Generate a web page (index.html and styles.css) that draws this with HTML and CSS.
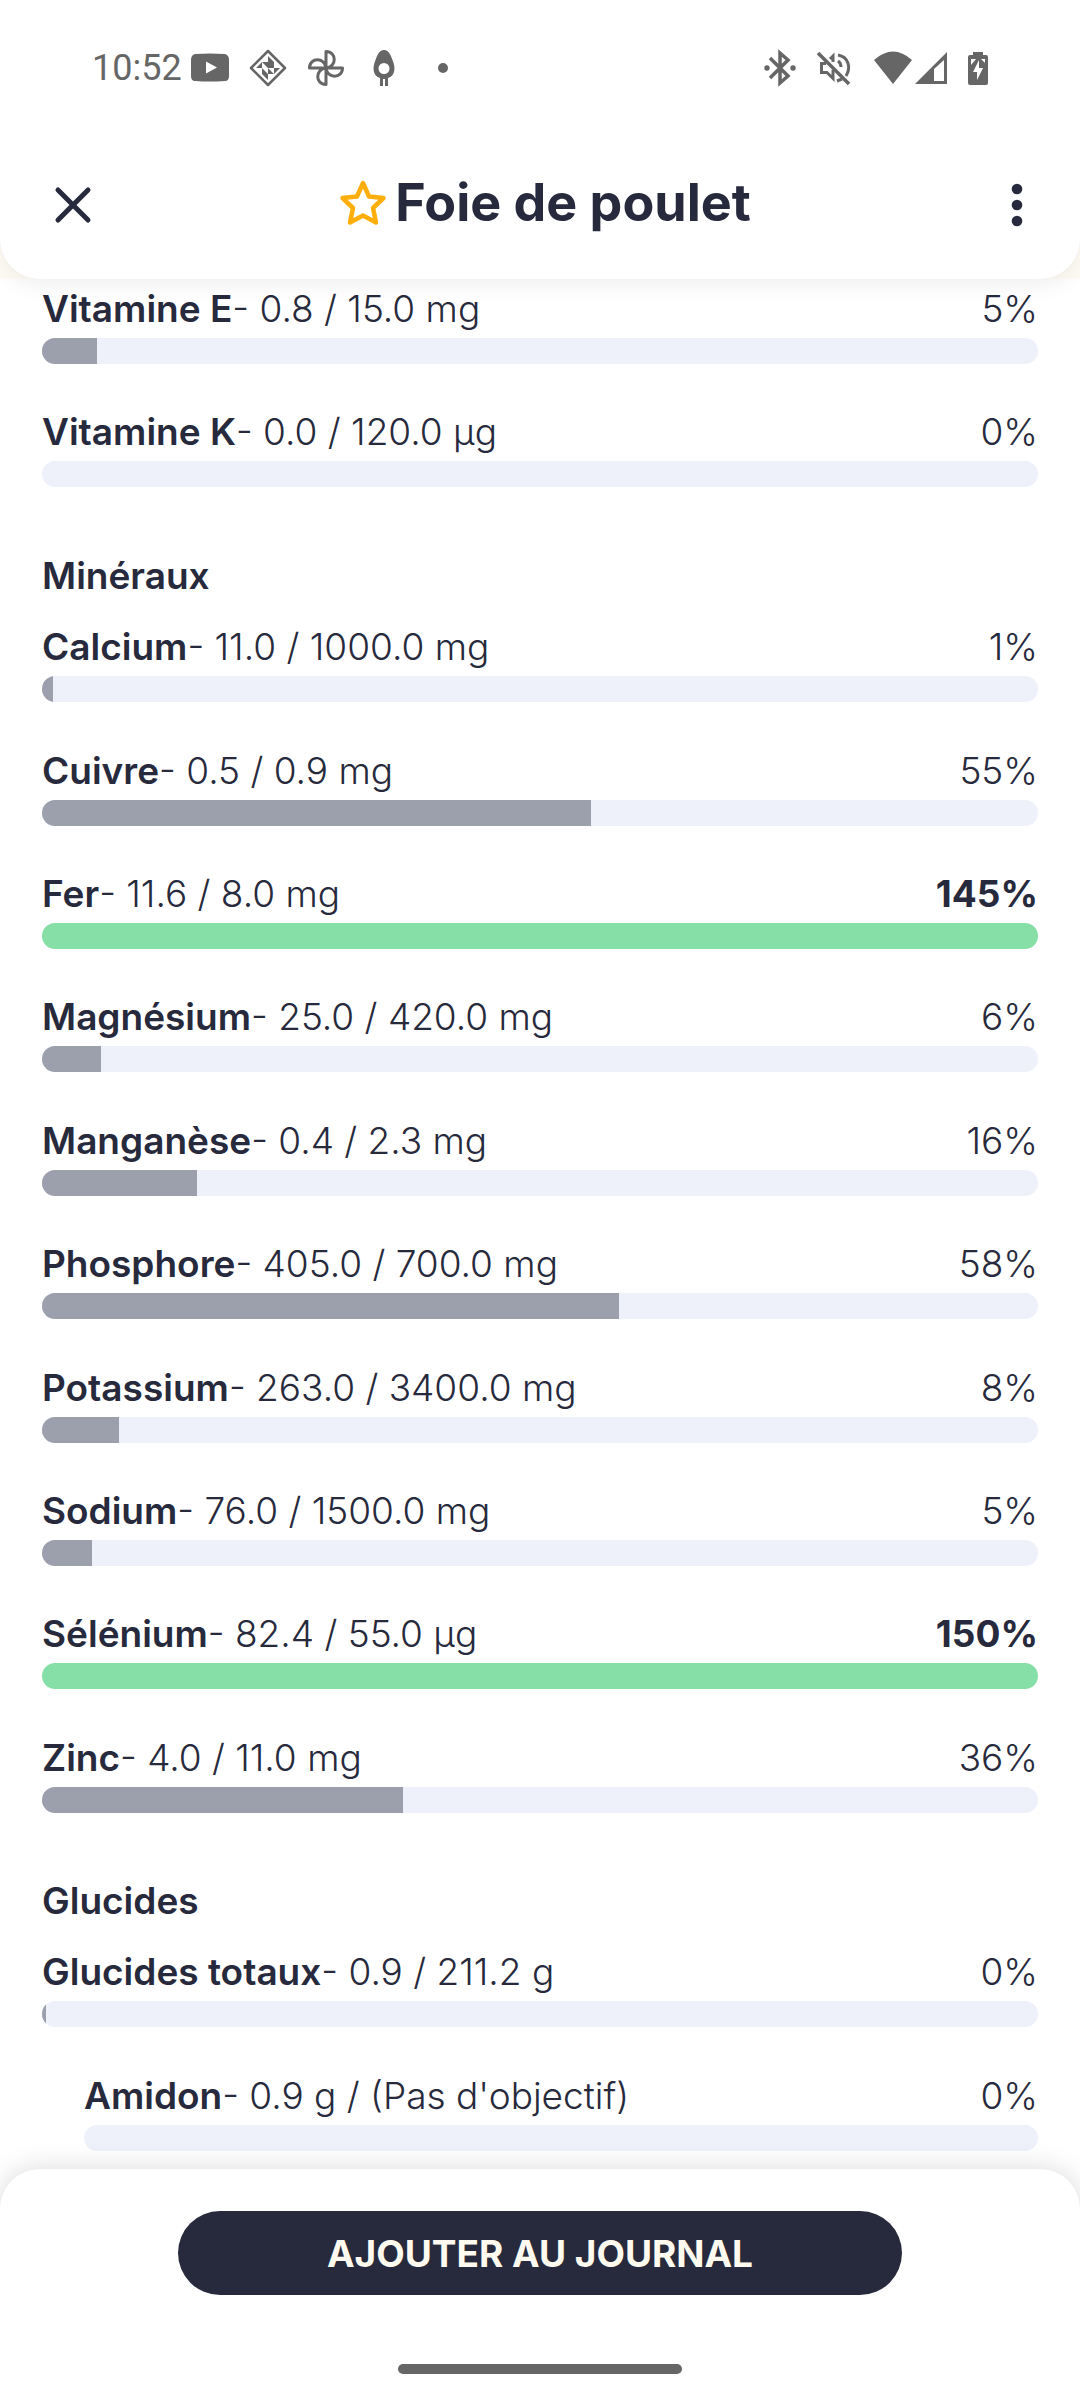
FILE: index.html
```html
<!DOCTYPE html>
<html lang="fr">
<head>
<meta charset="utf-8">
<meta name="viewport" content="width=device-width, initial-scale=1">
<title>Foie de poulet</title>
<link rel="stylesheet" href="styles.css">
</head>
<body>
<div class="screen">
  <div class="top">
    <header class="header">
      <div class="status">
        <div class="status-left">
          <span class="time">10:52</span>
          <svg class="icon-youtube" width="40" height="40" viewBox="0 0 40 40"><path fill="currentColor" d="M5 6Q20 5 35 6Q39 7 39 12V28Q39 33 35 33Q20 34 5 33Q1 33 1 28V12Q1 7 5 6Z"/><path fill="#fff" d="M16 13.500V25.500L27 19.500Z"/></svg>
          <svg class="icon-diamond" width="40" height="40" viewBox="0 0 40 40"><path d="M20 3L37 20L20 37L3 20Z" fill="none" stroke="currentColor" stroke-width="2.500" stroke-linejoin="round"/><path fill="currentColor" d="M20 8L26 14H20ZM32 20L26 26V20ZM20 32L14 26H20ZM8 20L14 14V20ZM14 14H20V20ZM20 14L26 20H20ZM26 14V20L20 14ZM26 26H20V20ZM14 26V20L20 26Z"/></svg>
          <svg class="icon-fan" width="40" height="40" viewBox="0 0 40 40" fill="none" stroke="currentColor" stroke-width="3" stroke-linejoin="round"><path d="M20 20V3.500C31 3.500 31 19 20 20ZM20 20H36.500C36.500 31 21 31 20 20ZM20 20V36.500C9 36.500 9 21 20 20ZM20 20H3.500C3.500 9 19 9 20 20Z"/></svg>
          <svg class="icon-avocado" width="40" height="40" viewBox="0 0 40 40"><path fill="currentColor" fill-rule="evenodd" d="M20 2C15 2 13 8 11.500 12C8 20 9 28 16 30V38H19V31H21V38H24V30C31 28 32 20 28.500 12C27 8 25 2 20 2ZM20 15A5.500 5.500 0 0 1 20 26A5.500 5.500 0 0 1 20 15Z"/></svg>
          <span class="more-dot"></span>
        </div>
        <div class="status-right">
          <svg width="36" height="40" viewBox="0 0 36 40" fill="none" stroke="currentColor" stroke-width="3.500"><path d="M8 10L26 28L18 35V5L26 12L8 30"/><circle cx="5" cy="20" r="2.700" fill="currentColor" stroke="none"/><circle cx="31" cy="20" r="2.700" fill="currentColor" stroke="none"/></svg>
          <svg class="icon-mute" width="40" height="40" viewBox="0 0 40 40" fill="none" stroke="currentColor" stroke-width="3"><path d="M4 5L35 36" stroke-width="3.500"/><path d="M12 15.500H7.500V24.500H13L19 30.500V22"/><path d="M16 11L19 8V14M24 13Q27 15 27 19M24 7C35 9 37 20 32 28M23 33L28 31"/></svg>
          <svg class="icon-wifi" width="40" height="40" viewBox="0 0 40 40"><path fill="currentColor" d="M1 12Q20 -5 39 12L20 36Z"/></svg>
          <svg width="36" height="40" viewBox="0 0 36 40"><path fill="currentColor" fill-rule="evenodd" d="M2 36L34 4V36ZM21 21V33H31V12Z"/></svg>
          <svg class="icon-battery" width="24" height="40" viewBox="0 0 24 40"><path fill="currentColor" fill-rule="evenodd" d="M7 4H17V7H20Q22 7 22 9V35Q22 37 20 37H4Q2 37 2 35V9Q2 7 4 7H7ZM13 12L7 24H11V32L17 20H13ZM5 11V17L10 11ZM15 11L19 15V11Z"/></svg>
        </div>
      </div>
      <div class="titlebar">
        <button class="icon-button" type="button" aria-label="Fermer"><svg width="48" height="48" viewBox="0 0 48 48"><path d="M9 9L39 39M39 9L9 39" stroke="currentColor" stroke-width="5" stroke-linecap="round"/></svg></button>
        <div class="title-group">
          <svg width="48" height="48" viewBox="0 0 48 48"><path d="M24 4L30 17.500L44.500 19L34 29L37 43.500L24 36.500L11 43.500L14 29L3.500 19L18 17.500Z" fill="none" stroke="#ffae0c" stroke-width="4.500" stroke-linejoin="round"/></svg>
          <h1>Foie de poulet</h1>
        </div>
        <button class="icon-button" type="button" aria-label="Plus d'options"><svg width="48" height="48" viewBox="0 0 48 48" fill="currentColor"><circle cx="24" cy="8" r="5.300"/><circle cx="24" cy="24" r="5.300"/><circle cx="24" cy="40" r="5.300"/></svg></button>
      </div>
    </header>
  </div>

  <main class="nutrients">
    <div class="row"><div class="label"><p><b>Vitamine E</b>- 0.8 / 15.0 mg</p><span>5%</span></div><div class="bar"><div class="fill" style="width:5.5%"></div></div></div>
    <div class="row"><div class="label"><p><b>Vitamine K</b>- 0.0 / 120.0 µg</p><span>0%</span></div><div class="bar"><div class="fill" style="width:0%"></div></div></div>
    <h2>Minéraux</h2>
    <div class="row"><div class="label"><p><b>Calcium</b>- 11.0 / 1000.0 mg</p><span>1%</span></div><div class="bar"><div class="fill" style="width:1.1%"></div></div></div>
    <div class="row"><div class="label"><p><b>Cuivre</b>- 0.5 / 0.9 mg</p><span>55%</span></div><div class="bar"><div class="fill" style="width:55.1%"></div></div></div>
    <div class="row reached"><div class="label"><p><b>Fer</b>- 11.6 / 8.0 mg</p><span>145%</span></div><div class="bar"><div class="fill" style="width:100%"></div></div></div>
    <div class="row"><div class="label"><p><b>Magnésium</b>- 25.0 / 420.0 mg</p><span>6%</span></div><div class="bar"><div class="fill" style="width:5.95%"></div></div></div>
    <div class="row"><div class="label"><p><b>Manganèse</b>- 0.4 / 2.3 mg</p><span>16%</span></div><div class="bar"><div class="fill" style="width:15.6%"></div></div></div>
    <div class="row"><div class="label"><p><b>Phosphore</b>- 405.0 / 700.0 mg</p><span>58%</span></div><div class="bar"><div class="fill" style="width:57.9%"></div></div></div>
    <div class="row"><div class="label"><p><b>Potassium</b>- 263.0 / 3400.0 mg</p><span>8%</span></div><div class="bar"><div class="fill" style="width:7.74%"></div></div></div>
    <div class="row"><div class="label"><p><b>Sodium</b>- 76.0 / 1500.0 mg</p><span>5%</span></div><div class="bar"><div class="fill" style="width:5.07%"></div></div></div>
    <div class="row reached"><div class="label"><p><b>Sélénium</b>- 82.4 / 55.0 µg</p><span>150%</span></div><div class="bar"><div class="fill" style="width:100%"></div></div></div>
    <div class="row"><div class="label"><p><b>Zinc</b>- 4.0 / 11.0 mg</p><span>36%</span></div><div class="bar"><div class="fill" style="width:36.2%"></div></div></div>
    <h2>Glucides</h2>
    <div class="row"><div class="label"><p><b>Glucides totaux</b>- 0.9 / 211.2 g</p><span>0%</span></div><div class="bar"><div class="fill" style="width:0.43%"></div></div></div>
    <div class="row nested"><div class="label"><p><b>Amidon</b>- 0.9 g / (Pas d'objectif)</p><span>0%</span></div><div class="bar"><div class="fill" style="width:0%"></div></div></div>
  </main>

  <footer class="footer">
    <button class="add" type="button">AJOUTER AU JOURNAL</button>
    <div class="home-indicator"></div>
  </footer>
</div>
</body>
</html>
```
FILE: styles.css
```css
* {
  box-sizing: border-box;
}

body {
  margin: 0;
  background: #fff;
  color: #272a3c;
  font-family: Inter, "Liberation Sans", sans-serif;
}

h1,
h2,
p {
  margin: 0;
}

svg {
  display: block;
  flex: none;
}

button {
  border: 0;
  padding: 0;
  background: none;
  color: inherit;
  font-family: inherit;
}

.screen {
  display: flex;
  flex-direction: column;
  min-height: 100vh;
}

.top {
  position: relative;
  z-index: 1;
  background: #fffbf5;
}

.header {
  padding-bottom: 43px;
  background: #fff;
  border-radius: 0 0 40px 40px;
  box-shadow: 0 4px 24px rgba(0, 0, 0, 0.08);
}

.status {
  display: flex;
  justify-content: space-between;
  height: 136px;
  padding: 48px 90px 0 92px;
  color: #666;
}

.status-left,
.status-right {
  display: flex;
  align-items: center;
  height: 40px;
}

.time {
  width: 98px;
  font-family: Roboto, sans-serif;
  font-size: 36px;
  font-weight: 400;
}

.icon-diamond,
.icon-fan,
.icon-avocado {
  margin-left: 18px;
}

.more-dot {
  width: 10px;
  height: 10px;
  margin-left: 34px;
  border-radius: 50%;
  background: currentColor;
}

.icon-mute {
  margin-left: 16px;
}

.icon-wifi {
  margin-left: 19px;
}

.icon-battery {
  margin-left: 17px;
}

.titlebar {
  display: flex;
  align-items: center;
  justify-content: space-between;
  height: 100px;
  padding: 38px 39px 0 49px;
}

.icon-button {
  width: 48px;
  height: 48px;
}

.title-group {
  display: flex;
  align-items: center;
  gap: 8px;
  padding-bottom: 4px;
}

h1 {
  font-size: 52px;
  font-weight: 700;
  line-height: 60px;
}

.nutrients {
  display: flex;
  flex: 1;
  flex-direction: column;
  justify-content: space-between;
  padding: 8px 42px 18px;
}

.row {
  padding-bottom: 36px;
}

.row:last-child {
  padding-bottom: 0;
}

.nested {
  padding-left: 42px;
}

.label {
  display: flex;
  justify-content: space-between;
  margin-bottom: 7px;
  font-size: 37px;
  font-weight: 300;
  line-height: 44px;
}

.label b {
  font-weight: 600;
}

.reached span {
  font-weight: 700;
}

.bar {
  height: 26px;
  overflow: hidden;
  border-radius: 13px;
  background: #eef1fa;
}

.fill {
  height: 100%;
  background: #9c9fac;
}

.reached .fill {
  background: #86dfa6;
}

h2 {
  padding: 20px 0 17px;
  font-size: 37px;
  font-weight: 600;
  line-height: 44px;
}

.footer {
  position: relative;
  display: flex;
  flex-direction: column;
  align-items: center;
  padding: 42px 0 26px;
  background: #fff;
  border-radius: 40px 40px 0 0;
  box-shadow: 0 0 28px rgba(0, 0, 0, 0.15);
}

.add {
  width: 67%;
  height: 84px;
  border-radius: 42px;
  background: #272a3c;
  color: #fffaf0;
  font-size: 37px;
  font-weight: 700;
}

.home-indicator {
  width: 284px;
  height: 10px;
  margin-top: 69px;
  border-radius: 5px;
  background: #666;
}
```
